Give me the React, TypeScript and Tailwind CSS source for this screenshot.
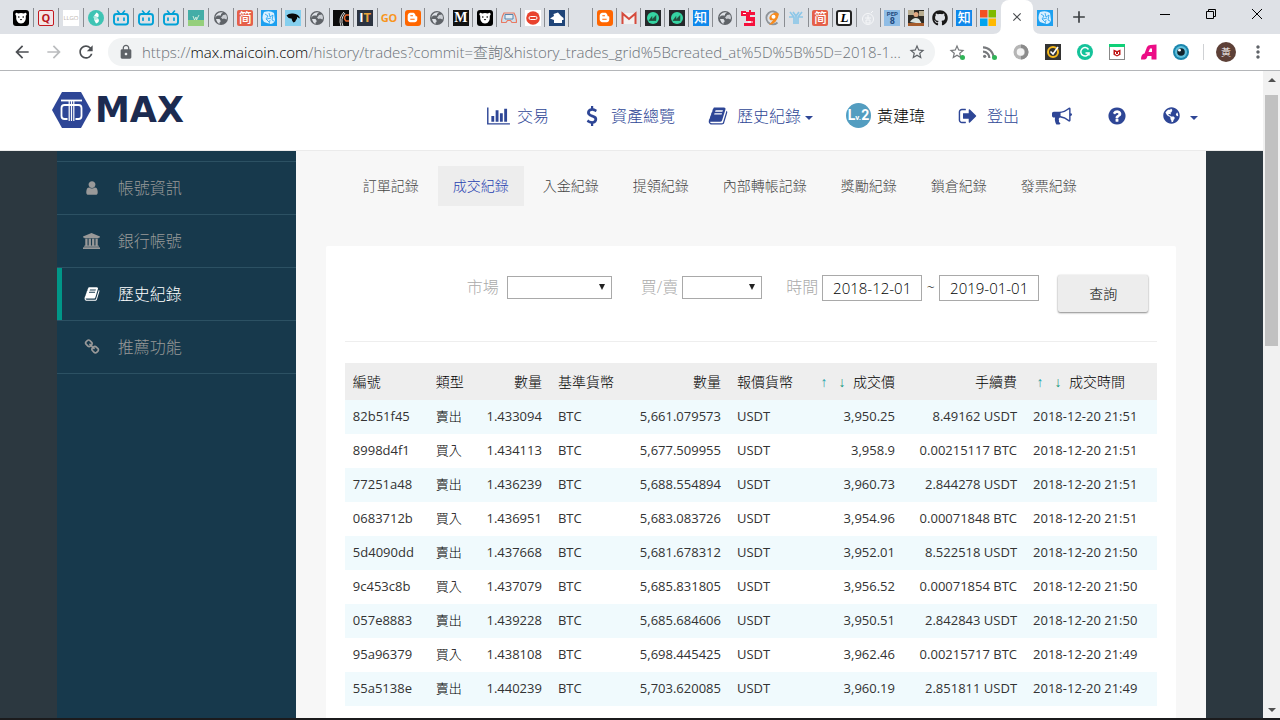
import { useState } from "react";
import type { ReactNode } from "react";
import {
  MdAdd,
  MdArrowBack,
  MdArrowForward,
  MdClose,
  MdLock,
  MdMoreVert,
  MdRefresh,
  MdRssFeed,
  MdStarBorder,
} from "react-icons/md";
import { FaBloggerB, FaGithub, FaGlobeAmericas } from "react-icons/fa";

const glyphs = {
  chart:
    "M640 896v512h-256v-512h256zm384-512v1024h-256v-1024h256zm1024 1152v128h-2048v-1536h128v1408h1920zm-640-896v768h-256v-768h256zm384-384v1152h-256v-1152h256z",
  dollar:
    "M1362 1185q0 153-99.5 263.5t-258.5 136.5v175q0 14-9 23t-23 9h-135q-13 0-22.5-9.5t-9.5-22.5v-175q-66-9-127.5-31t-101.5-44.5-74-48-46.5-37.5-17.5-18q-17-21-2-41l103-135q7-10 23-12 15-2 24 9l2 2q113 99 243 125 37 8 74 8 81 0 142.5-43t61.5-122q0-28-15-53t-33.5-42-58.5-37.5-66-32-80-32.5q-39-16-61.5-25t-61.5-26.5-62.5-31-56.5-35.5-53.5-42.5-43.5-49-35.5-58-21-66.5-8.5-78q0-138 98-242t255-134v-180q0-13 9.5-22.5t22.5-9.5h135q14 0 23 9t9 23v176q57 6 110.5 23t87 33.5 63.5 37.5 39 29 15 14q17 18 5 38l-81 146q-8 15-23 16-14 3-27-7-3-3-14.5-12t-39-26.5-58.5-32-74.5-26-85.5-11.5q-95 0-155 43t-60 111q0 26 8.5 48t29.5 41.5 39.5 33 56 31 60.5 27 70 27.5q53 20 81 31.5t76 35 75.5 42.5 62 50 53 63.5 31.5 76.5 13 94z",
  book: "M1703 478q40 57 18 129l-275 906q-19 64-76.5 107.5t-122.5 43.5h-923q-77 0-148.5-53.5t-99.5-131.5q-24-67-2-127 0-4 3-27t4-37q1-8-3-21.5t-3-19.5q2-11 8-21t16.5-23.5 16.5-23.5q23-38 45-91.5t30-91.5q3-10 .5-30t-.5-28q3-11 17-28t17-23q21-36 42-92t25-90q1-9-2.5-32t.5-28q4-13 22-30.5t22-22.5q19-26 42.5-84.5t27.5-96.5q1-8-3-25.5t-2-26.5q2-8 9-18t18-23 17-21q8-12 16.5-30.5t15-35 16-36 19.5-32 26.5-23.5 36-11.5 47.5 5.5l-1 3q38-9 51-9h761q74 0 114 56t18 130l-274 906q-36 119-71.5 153.5t-128.5 34.5h-869q-27 0-38 15-11 16-1 43 24 70 144 70h923q29 0 56-15.5t35-41.5l300-987q7-22 5-57 38 15 59 43zm-1064 2q-4 13 2 22.5t20 9.5h608q13 0 25.5-9.5t16.5-22.5l21-64q4-13-2-22.5t-20-9.5h-608q-13 0-25.5 9.5t-16.5 22.5zm-83 256q-4 13 2 22.5t20 9.5h608q13 0 25.5-9.5t16.5-22.5l21-64q4-13-2-22.5t-20-9.5h-608q-13 0-25.5 9.5t-16.5 22.5z",
  signOut:
    "M704 1440q0 4 1 20t.5 26.5-3 23.5-10 19.5-20.5 6.5h-320q-119 0-203.5-84.5t-84.5-203.5v-704q0-119 84.5-203.5t203.5-84.5h320q13 0 22.5 9.5t9.5 22.5q0 4 1 20t.5 26.5-3 23.5-10 19.5-20.5 6.5h-320q-66 0-113 47t-47 113v704q0 66 47 113t113 47h312l11.5 1 11.5 3 8 5.5 7 9 2 13.5zm928-544q0 26-19 45l-544 544q-19 19-45 19t-45-19-19-45v-288h-448q-26 0-45-19t-19-45v-384q0-26 19-45t45-19h448v-288q0-26 19-45t45-19 45 19l544 544q19 19 19 45z",
  bullhorn:
    "M1664 640q53 0 90.5 37.5t37.5 90.5-37.5 90.5-90.5 37.5v384q0 52-38 90t-90 38q-417-347-812-380-58 19-91 66t-31 100.5 40 92.5q-20 33-23 65.5t6 58 33.5 55 48 50 61.5 50.5q-29 58-111.5 83t-168.5 11.5-132-55.5q-7-23-29.5-87.5t-32-94.5-23-89-15-101 3.5-98.5 22-110.5h-122q-66 0-113-47t-47-113v-192q0-66 47-113t113-47h480q435 0 896-384 52 0 90 38t38 90v384zm-128 604v-954q-394 302-768 343v270q377 42 768 341z",
  question:
    "M1024 1376v-192q0-14-9-23t-23-9h-192q-14 0-23 9t-9 23v192q0 14 9 23t23 9h192q14 0 23-9t9-23zm256-672q0-88-55.5-163t-138.5-116-170-41q-243 0-371 213-15 24 8 42l132 100q7 6 19 6 16 0 25-12 53-68 86-92 34-24 86-24 48 0 85.5 26t37.5 59q0 38-20 61t-68 45q-63 28-115.5 86.5t-52.5 125.5v36q0 14 9 23t23 9h192q14 0 23-9t9-23q0-19 21.5-49.5t54.5-49.5q32-18 49-28.5t46-35 44.5-48 28-60.5 12.5-81zm384 192q0 209-103 385.5t-279.5 279.5-385.5 103-385.5-103-279.5-279.5-103-385.5 103-385.5 279.5-279.5 385.5-103 385.5 103 279.5 279.5 103 385.5z",
  user: "M1536 1399q0 109-62.5 187t-150.5 78h-854q-88 0-150.5-78t-62.5-187q0-85 8.5-160.5t31.5-152 58.5-131 94-89 134.5-34.5q131 128 313 128t313-128q76 0 134.5 34.5t94 89 58.5 131 31.5 152 8.5 160.5zm-256-887q0 159-112.5 271.5t-271.5 112.5-271.5-112.5-112.5-271.5 112.5-271.5 271.5-112.5 271.5 112.5 112.5 271.5z",
  bank: "M960 0l960 384v128h-128q0 26-20.5 45t-48.5 19h-1526q-28 0-48.5-19t-20.5-45h-128v-128zm-704 640h256v768h128v-768h256v768h128v-768h256v768h128v-768h256v768h59q28 0 48.5 19t20.5 45v64h-1664v-64q0-26 20.5-45t48.5-19h59v-768zm1595 960q28 0 48.5 19t20.5 45v128h-1920v-128q0-26 20.5-45t48.5-19h1782z",
  chain:
    "M1520 1216q0-40-28-68l-208-208q-28-28-68-28-42 0-72 32 3 3 19 18.5t21.5 21.5 15 19 13 25.5 3.5 27.5q0 40-28 68t-68 28q-15 0-27.5-3.5t-25.5-13-19-15-21.5-21.5-18.5-19q-33 31-33 73 0 40 28 68l206 207q27 27 68 27 40 0 68-26l147-146q28-28 28-67zm-703-705q0-40-28-68l-206-207q-28-28-68-28-39 0-68 27l-147 146q-28 28-28 67 0 40 28 68l208 208q27 27 68 27 42 0 72-31-3-3-19-18.5t-21.5-21.5-15-19-13-25.5-3.5-27.5q0-40 28-68t68-28q15 0 27.5 3.5t25.5 13 19 15 21.5 21.5 18.5 19q33-31 33-73zm895 705q0 120-85 203l-147 146q-83 83-203 83-121 0-204-85l-206-207q-83-83-83-203 0-123 88-209l-88-88q-86 88-208 88-120 0-204-84l-208-208q-84-84-84-204t85-203l147-146q83-83 203-83 121 0 204 85l206 207q83 83 83 203 0 123-88 209l88 88q86-88 208-88 120 0 204 84l208 208q84 84 84 204z",
};

type GlyphName = keyof typeof glyphs;

function Glyph({ name, className }: { name: GlyphName; className: string }) {
  const width = name === "chart" ? 2048 : name === "bank" ? 1920 : 1792;
  return (
    <svg viewBox={`0 0 ${width} 1792`} className={className} fill="currentColor" aria-hidden="true">
      <path d={glyphs[name]} />
    </svg>
  );
}

function Caret() {
  return (
    <svg viewBox="0 0 8 4" className="h-1 w-2" fill="currentColor" aria-hidden="true">
      <path d="M0 0h8L4 4z" />
    </svg>
  );
}

/* ---------- Favicons ---------- */

function Pic({ children }: { children: ReactNode }) {
  return (
    <svg viewBox="0 0 16 16" className="size-4 shrink-0" aria-hidden="true">
      {children}
    </svg>
  );
}

function Letters({ className, children }: { className: string; children: ReactNode }) {
  return (
    <span className={`flex size-4 shrink-0 items-center justify-center leading-none ${className}`}>
      {children}
    </span>
  );
}

const Bear = () => (
  <Pic>
    <rect width="16" height="16" rx="3" fill="#000" />
    <path d="M2.500 3.500q1-1.500 2.500 0q3-1 6 0q1.500-1.500 2.500 0q.6 1.500-.7 2.200q.7 7.300-4.800 7.800q-5.500-.5-4.800-7.800Q1.900 5 2.500 3.500z" fill="#fff" />
    <circle cx="5.800" cy="7" r=".8" />
    <circle cx="10.200" cy="7" r=".8" />
    <path d="M6.800 9h2.400L8 10.600z" />
  </Pic>
);
const Dash = () => (
  <Pic>
    <circle cx="8" cy="8" r="8" fill="#3fc4b4" />
    <path d="M8.500 2.500q3.500 1.500 1.500 5L6 6z" fill="#fff" />
    <path d="M5.500 6.500l5 2.500q1.500 3-2.500 4.500l-1.500-3z" fill="#fff" />
    <path d="M5.500 6.500l2.500-.5 2.500 3-4 1.500z" fill="#b5e9e2" />
  </Pic>
);
const Tv = () => (
  <Pic>
    <path d="M4.500 1l2.300 2.700M11.500 1L9.200 3.700" stroke="#00a1d6" strokeWidth="1.600" strokeLinecap="round" />
    <rect x="1" y="4" width="14" height="10.500" rx="2.500" fill="none" stroke="#00a1d6" strokeWidth="1.900" />
    <path d="M5 8v2.200M11 8v2.200" stroke="#00a1d6" strokeWidth="1.700" strokeLinecap="round" />
  </Pic>
);
const Green = () => (
  <Pic>
    <rect width="16" height="16" fill="#43ada7" />
    <rect y="10" width="16" height="6" fill="#95cf7c" />
    <path d="M5 6l1.500 4L8 7l.5 3L11 5" fill="none" stroke="#d9f0e0" strokeWidth=".9" />
  </Pic>
);
const World = () => (
  <Pic>
    <circle cx="8" cy="8" r="7" fill="#5f6368" />
    <path d="M2.500 8.500Q3 5.500 5 5.500h3V4l2-1.500q-3.500-1-6 1.500-2 2-1.500 4.500z" fill="#dee1e6" />
    <path d="M3 9h3.500l1 1.500v1.500l-1 .5v1.500Q4 13 3 9z" fill="#dee1e6" />
    <path d="M10 5l3-.5q1 1.500 1 3.500l-.5 1.500-2.500-1-1.500.5-1.500-1.500L9 6.500z" fill="#dee1e6" opacity=".85" />
  </Pic>
);
const Jian = () => <Letters className="rounded-[2px] bg-[#e5604a] text-[13px] font-medium text-white">简</Letters>;
const Scribble = () => (
  <Pic>
    <rect width="16" height="16" fill="#1da0f0" />
    <path d="M3 2q6-2 10 1l1 7q-1 4-5 4l-6-2Q0 8 3 2z" fill="#d9f0ff" />
    <path d="M4 4l3 2-2 3 3 3M8 3l1 4 3-2-1 5 2 1M6 9l4-1M9 10l-1 4" fill="none" stroke="#1da0f0" strokeWidth=".8" />
  </Pic>
);
const Bird = () => (
  <Pic>
    <rect width="16" height="16" fill="#85cfee" />
    <path d="M1.500 5.500Q4 3 8 3.500q6 .5 7 5l-3-1.500q.5 2-1 3-.5 2-2.500 2.500Q7 11 6.500 8.500 3.500 9 1.500 5.500z" fill="#0a0a0a" />
  </Pic>
);
const Robot = () => (
  <Pic>
    <rect width="16" height="16" fill="#0c0c0c" />
    <path d="M8 16q-3-8 3-14M10 16q-3-7 2-13" fill="none" stroke="#ddd" />
    <path d="M16 5h-3q-3 3 0 6h3" fill="none" stroke="#e6672e" strokeWidth="1.500" />
  </Pic>
);
const ItHelp = () => (
  <Letters className="bg-[#2c3340] text-[13px] font-bold text-white">
    I<span className="text-[#e9a23b]">T</span>
  </Letters>
);
const Blogger = () => (
  <span className="flex size-4 shrink-0 items-center justify-center rounded-[3px] bg-[#ff6600]">
    <FaBloggerB className="size-[11px] text-white" />
  </span>
);
const Medium = () => <Letters className="bg-[#111] font-['Liberation_Serif',serif] text-[14px] font-bold text-white">M</Letters>;
const Pad = () => (
  <Pic>
    <path d="M3 3h10q3 5 2.300 9.500H11l-1.500-2h-3l-1.500 2H.7Q0 8 3 3z" fill="#cfe0ec" stroke="#e97a62" strokeWidth="1.200" />
    <path d="M4 4.500h8v4.500H4z" fill="#e6eef4" stroke="#5a84ab" />
  </Pic>
);
const Stop = () => (
  <Pic>
    <rect width="16" height="16" fill="#fff" />
    <circle cx="8" cy="8" r="6.800" fill="#e9432e" />
    <rect x="4" y="6.500" width="8" height="3" rx="1.500" fill="#e9432e" stroke="#fff" />
  </Pic>
);
const Fish = () => (
  <Pic>
    <rect width="16" height="16" fill="#1f4478" />
    <path d="M1 8.500L5 6l-.5-2L9 2.500 12 6l2.500 2v2H13v3H5v-3z" fill="#fff" />
  </Pic>
);
const Gmail = () => (
  <Pic>
    <path d="M1 3h14v11H1z" fill="#f2f2f2" />
    <path d="M1.500 14V3.500L8 9l6.500-5.500V14" fill="none" stroke="#d54b3d" strokeWidth="2" />
  </Pic>
);
const Mountain = () => (
  <Pic>
    <rect width="16" height="16" fill="#26292b" />
    <circle cx="8" cy="8" r="6" fill="#35d4a2" />
    <path d="M4 10.500l3-4v3l4-4v5zM4 10.500h7" fill="#22503f" stroke="#22503f" strokeWidth=".5" />
  </Pic>
);
const Zhi = () => <Letters className="bg-[#0f88eb] text-[13px] font-medium text-white">知</Letters>;
const RedFive = () => (
  <Pic>
    <path d="M0 1h5v1h3V0h2v2h4v3H9v2h5v9H3v-3h7v-2H5V6H0z" fill="#f5103c" />
    <path d="M2 3.500h3M7 12h5" stroke="#fff" />
  </Pic>
);
const Orange = () => (
  <Pic>
    <path d="M12.500 12.500A6.500 6.500 0 1 1 13 4" fill="none" stroke="#8f9499" strokeWidth="1.800" />
    <path d="M4 15q8-1 10-11-3-3-7 0t-2 6q3 1 4-1" fill="#f68b1f" />
    <circle cx="8.500" cy="6.800" r="2" fill="#fff" />
  </Pic>
);
const Twig = () => (
  <Pic>
    <path d="M2 2l4 5v7M14 2l-4 5v7M1 7h5M15 7h-5M5 2l3 4 3-4M8 6v8" fill="none" stroke="#8ec7e8" strokeWidth="1.700" />
  </Pic>
);
const Script = () => (
  <Letters className="rounded-[3px] border-2 border-[#222] bg-white font-['Liberation_Serif',serif] text-[13px] font-bold text-black italic">
    L
  </Letters>
);
const Ghost = () => (
  <Pic>
    <circle cx="8" cy="9" r="5.500" fill="none" stroke="#f6f7f9" />
    <path d="M5 8h6M8 5v4M6 10h4v3H6zM11 3l2-2" fill="none" stroke="#f6f7f9" />
  </Pic>
);
const Pep = () => (
  <Letters className="flex-col bg-[#8fbde6] font-['Roboto',sans-serif] font-bold text-[#1f4a80]">
    <span className="text-[6px] leading-[7px]">PEP</span>
    <span className="text-[9px] leading-[9px]">8</span>
  </Letters>
);
const Photo = () => (
  <Pic>
    <rect width="16" height="16" fill="#2d2a24" />
    <path d="M0 0h6v5H0zM11 1h5v5h-5z" fill="#b9ad90" />
    <circle cx="8" cy="4.500" r="2.500" fill="#e2a981" />
    <path d="M2 12q4-6 9-3l3 5z" fill="#d9e3df" />
    <path d="M0 13h16v3H0z" fill="#a55b2b" />
  </Pic>
);
const Windows = () => (
  <Pic>
    <path d="M0 0h7.500v7.500H0z" fill="#f25022" />
    <path d="M8.500 0H16v7.500H8.500z" fill="#7fba00" />
    <path d="M0 8.500h7.500V16H0z" fill="#00a4ef" />
    <path d="M8.500 8.500H16V16H8.500z" fill="#ffb900" />
  </Pic>
);

const tabs: ReactNode[] = [
  <Bear />,
  <Letters className="rounded-[2px] border-[1.5px] border-[#c4191f] bg-[#f3e4e6] text-[11px] font-bold text-[#b9161c]">Q</Letters>,
  <Letters className="bg-white text-[6px] text-[#8d7d75]">LLGO</Letters>,
  <Dash />,
  <Tv />,
  <Tv />,
  <Tv />,
  <Green />,
  <World />,
  <Jian />,
  <Scribble />,
  <Bird />,
  <World />,
  <Robot />,
  <ItHelp />,
  <Letters className="text-[11px] font-bold text-[#f8951d]">GO</Letters>,
  <Blogger />,
  <World />,
  <Medium />,
  <Bear />,
  <Pad />,
  <Stop />,
  <Fish />,
  null,
  <Blogger />,
  <Gmail />,
  <Mountain />,
  <Mountain />,
  <Zhi />,
  <World />,
  <RedFive />,
  <Orange />,
  <Twig />,
  <Jian />,
  <Script />,
  <Ghost />,
  <Pep />,
  <Photo />,
  <FaGithub className="size-4 text-[#181717]" />,
  <Zhi />,
  <Windows />,
];

function TabStrip() {
  return (
    <div className="flex h-[34px] shrink-0 bg-[#dee1e6]">
      <div className="flex min-w-0 flex-1 pt-2 pl-[9px]">
        {tabs.map((icon, i) => (
          <button
            key={i}
            type="button"
            aria-label={`分頁 ${i + 1}`}
            className={`flex h-[19px] min-w-0 items-center justify-center border-r border-[#8a8d92] last:border-transparent ${
              i < 9 ? "basis-[25px] grow" : "basis-6 grow"
            }`}
          >
            {icon}
          </button>
        ))}
      </div>
      <div className="relative flex w-8 items-center justify-center rounded-t-lg bg-white">
        <svg viewBox="0 0 8 8" className="absolute bottom-0 -left-2 size-2 text-white" fill="currentColor" aria-hidden="true">
          <path d="M8 0v8H0q8 0 8-8z" />
        </svg>
        <svg viewBox="0 0 8 8" className="absolute -right-2 bottom-0 size-2 text-white" fill="currentColor" aria-hidden="true">
          <path d="M0 0v8h8Q0 8 0 0z" />
        </svg>
        <button type="button" aria-label="關閉分頁">
          <MdClose className="size-3.5 text-[#4a4d51]" />
        </button>
      </div>
      <div className="pt-2">
        <button type="button" aria-label="分頁 42" className="flex h-[19px] w-[25px] items-center justify-center border-r border-[#8a8d92]">
          <Scribble />
        </button>
      </div>
      <button type="button" aria-label="新增分頁" className="ml-[11px] text-[#3c4043]">
        <MdAdd className="size-5" />
      </button>
      <div className="ml-[53px] flex w-[138px] shrink-0 pb-1.5">
        <button type="button" aria-label="最小化" className="flex flex-1 items-center justify-center">
          <svg viewBox="0 0 10 10" className="size-2.5" stroke="#000" fill="none" aria-hidden="true">
            <path d="M0 5.500h10" />
          </svg>
        </button>
        <button type="button" aria-label="還原" className="flex flex-1 items-center justify-center">
          <svg viewBox="0 0 10 10" className="size-2.5" stroke="#000" fill="none" aria-hidden="true">
            <path d="M.5 2.500h7v7h-7zM2.500 2.500v-2h7v7h-2" />
          </svg>
        </button>
        <button type="button" aria-label="關閉" className="flex flex-1 items-center justify-center">
          <svg viewBox="0 0 10 10" className="size-2.5" stroke="#000" fill="none" aria-hidden="true">
            <path d="M0 0l10 10M10 0L0 10" />
          </svg>
        </button>
      </div>
    </div>
  );
}

const GreenDot = () => <span className="absolute right-0 bottom-0 size-[5px] rounded-full bg-[#2fb457]" />;

const extensions: { label: string; icon: ReactNode }[] = [
  {
    label: "書籤",
    icon: (
      <>
        <MdStarBorder className="size-[18px] shrink-0 text-[#77797c]" />
        <GreenDot />
      </>
    ),
  },
  {
    label: "RSS",
    icon: (
      <>
        <MdRssFeed className="size-[18px] shrink-0 text-[#77797c]" />
        <GreenDot />
      </>
    ),
  },
  {
    label: "圓環",
    icon: (
      <Pic>
        <circle cx="8" cy="8" r="7.500" fill="#b5b5b5" />
        <path d="M8 .5a7.500 7.500 0 0 1 0 15V12a4 4 0 0 0 0-8z" fill="#8b8b8b" />
        <circle cx="7.500" cy="8" r="3.800" fill="#f4f4f4" />
      </Pic>
    ),
  },
  {
    label: "安全檢查",
    icon: (
      <Pic>
        <rect width="16" height="16" fill="#333" />
        <circle cx="8" cy="8" r="5" fill="none" stroke="#f6b91c" strokeWidth="2" />
        <path d="M5.500 7.500L8 10l5-7" fill="none" stroke="#fff" strokeWidth="1.600" />
      </Pic>
    ),
  },
  {
    label: "文法",
    icon: (
      <Pic>
        <circle cx="8" cy="8" r="8" fill="#15c39a" />
        <path d="M11.500 5.500A4.200 4.200 0 1 0 12 9H8.500M12 9v2.500" fill="none" stroke="#fff" strokeWidth="1.500" />
      </Pic>
    ),
  },
  {
    label: "防護",
    icon: (
      <Pic>
        <rect x=".5" y=".5" width="15" height="15" fill="#fff" stroke="#888" />
        <rect width="16" height="3" fill="#10d078" />
        <path d="M4.500 5.500L8 7l3.500-1.500v5.200L8 12.500l-3.500-1.800z" fill="#c01818" />
        <path d="M6.500 8v2l1.500.8L9.500 10V8" fill="none" stroke="#fff" />
      </Pic>
    ),
  },
  {
    label: "剪輯",
    icon: (
      <Pic>
        <path d="M0 15.500Q0 10 3.500 9.500L6 3Q7 1 9.500 1l6-.5v15H10.500V12H6.500q-1 3.500-3 3.500z" fill="#ec0d86" />
        <path d="M7.500 8l1.500-3.500h2V8z" fill="#fff" />
      </Pic>
    ),
  },
  {
    label: "視覺",
    icon: (
      <Pic>
        <circle cx="8" cy="8" r="8" fill="#1b86ad" />
        <circle cx="8" cy="8" r="6" fill="#5fc0dc" />
        <circle cx="8" cy="8" r="3.800" fill="#11242e" />
        <circle cx="6.500" cy="6.200" r="1.400" fill="#fff" />
      </Pic>
    ),
  },
];

function Toolbar() {
  return (
    <div className="flex h-[37px] shrink-0 items-center border-b border-[#b4b6b9] bg-white pr-3 pl-3 text-[#5f6368]">
      <div className="flex w-24 shrink-0 gap-3">
        <button type="button" aria-label="上一頁">
          <MdArrowBack className="size-5 text-[#4c4f53]" />
        </button>
        <button type="button" aria-label="下一頁">
          <MdArrowForward className="size-5 text-[#babcbe]" />
        </button>
        <button type="button" aria-label="重新載入">
          <MdRefresh className="size-5 text-[#4c4f53]" />
        </button>
      </div>
      <div className="flex h-7 min-w-0 flex-1 items-center rounded-full bg-[#f1f3f4] pr-[9px] pl-2.5">
        <MdLock className="size-4 shrink-0" />
        <a href="#url" className="ml-2 min-w-0 flex-1 text-[15px] leading-5 whitespace-nowrap text-[#6c7278]">
          https://<span className="text-black">max.maicoin.com</span>
          /history/trades?commit=查詢&amp;history_trades_grid%5Bcreated_at%5D%5B%5D=2018-1...
        </a>
        <button type="button" aria-label="加入書籤" className="ml-1">
          <MdStarBorder className="size-[18px]" />
        </button>
      </div>
      <div className="ml-3.5 flex shrink-0 gap-4">
        {extensions.map((ext) => (
          <button key={ext.label} type="button" aria-label={ext.label} className="relative flex size-4 items-center justify-center">
            {ext.icon}
          </button>
        ))}
      </div>
      <div className="ml-3.5 h-4 w-px bg-[#cfd1d4]" />
      <button
        type="button"
        aria-label="使用者"
        className="ml-3 flex size-5 items-center justify-center rounded-full bg-[#5d4037] text-[10px] text-white"
      >
        黃
      </button>
      <button type="button" aria-label="選單" className="ml-3">
        <MdMoreVert className="size-5" />
      </button>
    </div>
  );
}

/* ---------- Site ---------- */

function Logo() {
  return (
    <a href="#home" aria-label="MAX" className="flex items-center gap-1 text-[#1c2b50]">
      <svg viewBox="0 0 39 36" className="h-9 w-[39px]" aria-hidden="true">
        <path d="M10 0h19l10 18-10 18H10L0 18z" fill="#2e4696" />
        <g fill="none" stroke="#fff">
          <path d="M9 8.500h21" strokeWidth="1.800" />
          <path
            d="M15.500 27h-3q-3 0-3-3v-8q0-3 3-3h14q3 0 3 3v8q0 3-3 3h-3"
            strokeWidth="1.800"
          />
          <path d="M17.200 9v20M19.500 9v20M21.800 9v20" strokeWidth="1.200" />
        </g>
      </svg>
      <span className="font-['DejaVu_Sans',sans-serif] text-[35px] leading-9 font-bold">MAX</span>
    </a>
  );
}

function NavLink({ href, icon, label, caret }: { href: string; icon: GlyphName; label: string; caret?: boolean }) {
  return (
    <a href={href} className="flex items-center">
      <Glyph name={icon} className={icon === "chart" ? "h-5 w-[23px]" : "size-5"} />
      <span className={icon === "chart" ? "ml-[7px]" : "ml-[9px]"}>{label}</span>
      {caret && (
        <span className="mt-1 ml-1">
          <Caret />
        </span>
      )}
    </a>
  );
}

function SiteHeader() {
  return (
    <header className="flex h-20 shrink-0 justify-between border-b border-[#ebebeb] bg-white pr-[65px] pl-[52px] text-base text-[#2e4696]">
      <div className="flex items-center pb-0.5">
        <Logo />
      </div>
      <nav className="flex items-center gap-[33px] pt-2.5">
        <NavLink href="#trade" icon="chart" label="交易" />
        <NavLink href="#assets" icon="dollar" label="資產總覽" />
        <NavLink href="#history" icon="book" label="歷史紀錄" caret />
        <a href="#profile" className="flex items-center gap-1.5 text-black">
          <span className="flex size-[25px] items-baseline justify-center rounded-full bg-[#539dc0] font-['Roboto',sans-serif] text-[14px] leading-[25px] font-bold text-white">
            L<span className="text-[8px]">v.</span>2
          </span>
          黃建瑋
        </a>
        <NavLink href="#logout" icon="signOut" label="登出" />
        <a href="#news" aria-label="公告" className="pr-0.5">
          <Glyph name="bullhorn" className="size-5" />
        </a>
        <a href="#help" aria-label="說明" className="pr-0.5">
          <Glyph name="question" className="size-5" />
        </a>
        <a href="#language" aria-label="語言" className="flex items-center gap-2.5">
          <FaGlobeAmericas className="ml-px size-[17px]" />
          <span className="mt-1">
            <Caret />
          </span>
        </a>
      </nav>
    </header>
  );
}

const menu: { label: string; icon: GlyphName; active?: boolean }[] = [
  { label: "帳號資訊", icon: "user" },
  { label: "銀行帳號", icon: "bank" },
  { label: "歷史紀錄", icon: "book", active: true },
  { label: "推薦功能", icon: "chain" },
];

function Sidebar() {
  return (
    <aside className="w-[239px] shrink-0 bg-[#17394c] pt-2.5">
      <ul className="border-t border-[#2c5163]">
        {menu.map((item) => (
          <li key={item.label} className="border-b border-[#2c5163]">
            <a
              href={`#${item.icon}`}
              className={
                item.active
                  ? "flex h-[52px] items-center border-l-[5px] border-[#009688] pl-5 text-white"
                  : "flex h-[52px] items-center border-l-[5px] border-transparent pl-5 text-[#999]"
              }
            >
              <span className="flex w-5 justify-center">
                <Glyph name={item.icon} className={item.icon === "bank" ? "h-4 w-[17px]" : "size-4"} />
              </span>
              <span className="ml-4 text-base">{item.label}</span>
            </a>
          </li>
        ))}
      </ul>
    </aside>
  );
}

const sections = ["訂單記錄", "成交紀錄", "入金紀錄", "提領紀錄", "內部轉帳記錄", "獎勵紀錄", "鎖倉紀錄", "發票紀錄"];

const trades = [
  ["82b51f45", "賣出", "1.433094", "BTC", "5,661.079573", "USDT", "3,950.25", "8.49162 USDT", "2018-12-20 21:51"],
  ["8998d4f1", "買入", "1.434113", "BTC", "5,677.509955", "USDT", "3,958.9", "0.00215117 BTC", "2018-12-20 21:51"],
  ["77251a48", "賣出", "1.436239", "BTC", "5,688.554894", "USDT", "3,960.73", "2.844278 USDT", "2018-12-20 21:51"],
  ["0683712b", "買入", "1.436951", "BTC", "5,683.083726", "USDT", "3,954.96", "0.00071848 BTC", "2018-12-20 21:51"],
  ["5d4090dd", "賣出", "1.437668", "BTC", "5,681.678312", "USDT", "3,952.01", "8.522518 USDT", "2018-12-20 21:50"],
  ["9c453c8b", "買入", "1.437079", "BTC", "5,685.831805", "USDT", "3,956.52", "0.00071854 BTC", "2018-12-20 21:50"],
  ["057e8883", "賣出", "1.439228", "BTC", "5,685.684606", "USDT", "3,950.51", "2.842843 USDT", "2018-12-20 21:50"],
  ["95a96379", "買入", "1.438108", "BTC", "5,698.445425", "USDT", "3,962.46", "0.00215717 BTC", "2018-12-20 21:49"],
  ["55a5138e", "賣出", "1.440239", "BTC", "5,703.620085", "USDT", "3,960.19", "2.851811 USDT", "2018-12-20 21:49"],
];

const columns: { label: string; width: string; right?: boolean; sortable?: boolean }[] = [
  { label: "編號", width: "w-[83px]" },
  { label: "類型", width: "w-[44px]" },
  { label: "數量", width: "w-[78px]", right: true },
  { label: "基準貨幣", width: "w-[73px]" },
  { label: "數量", width: "w-[106px]", right: true },
  { label: "報價貨幣", width: "w-[73px]" },
  { label: "成交價", width: "w-[101px]", right: true, sortable: true },
  { label: "手續費", width: "w-[122px]", right: true },
  { label: "成交時間", width: "w-[132px]", sortable: true },
];

function SelectBox({ id, width }: { id: string; width: string }) {
  return (
    <span className={`relative mt-px block ${width}`}>
      <select id={id} className="block h-[23px] w-full appearance-none border border-[#a9a9a9] bg-white pl-1 text-sm">
        <option value=""></option>
      </select>
      <svg viewBox="0 0 6 6" className="pointer-events-none absolute top-2 right-[7px] size-1.5" fill="#222" aria-hidden="true">
        <path d="M0 0h6L3 6z" />
      </svg>
    </span>
  );
}

function FilterForm() {
  const [from, setFrom] = useState("2018-12-01");
  const [to, setTo] = useState("2019-01-01");
  const field = "h-[26px] w-[100px] border border-[#a9a9a9] bg-white text-center text-[15px] text-black";
  return (
    <form
      onSubmit={(e) => e.preventDefault()}
      className="flex items-start justify-end border-b border-[#eee] pt-[29px] pr-[9px] pb-[29px] text-base leading-6 text-[#aaa]"
    >
      <label htmlFor="market" className="mr-2">
        市場
      </label>
      <SelectBox id="market" width="w-[105px]" />
      <label htmlFor="side" className="mr-1 ml-[29px]">
        買/賣
      </label>
      <SelectBox id="side" width="w-20" />
      <label htmlFor="from" className="mr-1 ml-6">
        時間
      </label>
      <input id="from" value={from} onChange={(e) => setFrom(e.target.value)} className={field} />
      <span className="w-[17px] text-center text-sm leading-6 text-black">~</span>
      <input aria-label="結束時間" value={to} onChange={(e) => setTo(e.target.value)} className={field} />
      <button
        type="submit"
        className="ml-[19px] h-[37px] w-[90px] rounded-[2px] bg-[#ededed] text-sm text-black shadow-[0_1px_2px_rgba(0,0,0,0.45),0_0_2px_rgba(0,0,0,0.1)]"
      >
        查詢
      </button>
    </form>
  );
}

function TradesTable() {
  return (
    <table className="mt-[21px] w-full table-fixed border-collapse whitespace-nowrap">
      <thead>
        <tr className="h-[37px] bg-[#eee] text-sm text-black">
          {columns.map((col, i) => (
            <th
              key={i}
              scope="col"
              className={`${col.width} p-0 px-2 font-light ${col.right ? "text-right" : "text-left"}`}
            >
              {col.sortable && (
                <span className="mr-1 inline-flex gap-1 font-['Liberation_Sans',sans-serif]">
                  <a href="#asc" aria-label="遞增" className="w-3.5 text-center text-[#1f9fa8]">
                    ↑
                  </a>
                  <a href="#desc" aria-label="遞減" className="w-3.5 text-center text-[#15967b]">
                    ↓
                  </a>
                </span>
              )}
              {col.label}
            </th>
          ))}
        </tr>
      </thead>
      <tbody>
        {trades.map((row) => (
          <tr key={row[0]} className="h-[34px] text-[13px] text-[#333] odd:bg-[#f0fafd]">
            {row.map((cell, i) => (
              <td
                key={i}
                className={`p-0 px-2 ${columns[i].right ? "text-right" : "text-left"} ${i === 1 ? "text-black" : "font-normal"}`}
              >
                {cell}
              </td>
            ))}
          </tr>
        ))}
      </tbody>
    </table>
  );
}

function Scrollbar() {
  return (
    <div className="flex w-[17px] shrink-0 flex-col items-center justify-between bg-[#f1f1f1]" aria-hidden="true">
      <div className="flex flex-col items-center">
        <div className="flex h-6 items-center pb-1.5">
          <svg viewBox="0 0 8 4" className="h-1 w-2" fill="#505050">
            <path d="M0 4h8L4 0z" />
          </svg>
        </div>
        <div className="h-[251px] w-[13px] bg-[#c1c1c1]" />
      </div>
      <div className="flex h-[17px] items-center text-[#505050]">
        <Caret />
      </div>
    </div>
  );
}

export default function App() {
  return (
    <div
      lang="zh-Hant"
      className="flex h-screen flex-col overflow-hidden bg-[#2c3840] font-['Open_Sans','Noto_Sans_CJK_TC',sans-serif] font-light"
    >
      <TabStrip />
      <Toolbar />
      <div className="flex min-h-0 flex-1">
        <div className="flex min-w-0 flex-1 flex-col">
          <SiteHeader />
          <div className="mx-auto flex min-h-0 w-[91%] flex-1">
            <Sidebar />
            <main className="flex min-w-0 flex-1 flex-col bg-[#f7f7f7] px-[30px] pt-[15px]">
              <nav className="flex h-10 shrink-0 gap-1 pl-[22px] text-sm">
                {sections.map((s, i) => (
                  <a
                    key={s}
                    href={`#section-${i}`}
                    className={
                      i === 1
                        ? "flex items-center bg-[#ededed] px-[15px] text-[#2540b0]"
                        : "flex items-center px-[15px] text-[#444]"
                    }
                  >
                    {s}
                  </a>
                ))}
              </nav>
              <section className="mt-10 min-h-0 flex-1 rounded-t-[2px] bg-white px-[19px]">
                <FilterForm />
                <TradesTable />
              </section>
            </main>
          </div>
        </div>
        <Scrollbar />
      </div>
      <div className="h-0.5 shrink-0 bg-[#1b1b1d]" />
    </div>
  );
}
